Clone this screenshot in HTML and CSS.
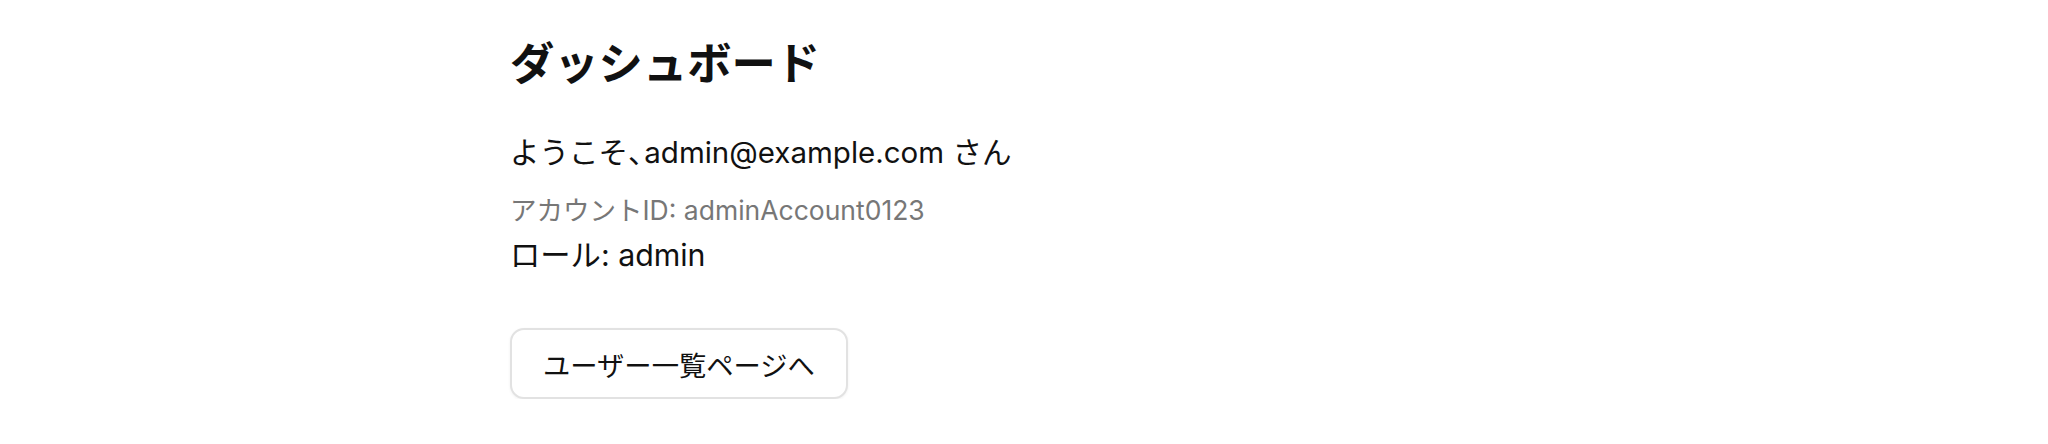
FILE: index.html
```html
<!DOCTYPE html>
<html lang="ja">
<head>
<meta charset="utf-8">
<title>ダッシュボード</title>
<link rel="stylesheet" href="styles.css">
</head>
<body>
<main class="page">
  <h1 class="title">ダッシュボード</h1>
  <p class="welcome">ようこそ<span class="comma">、</span>admin@example.com さん</p>
  <p class="account">アカウントID: adminAccount0123</p>
  <p class="role">ロール: admin</p>
  <div class="actions">
    <button class="btn" type="button">ユーザー一覧ページへ</button>
  </div>
</main>
</body>
</html>
```

FILE: styles.css
```css
html, body {
  margin: 0;
  padding: 0;
  background: #ffffff;
}
body {
  font-family: Inter, "Noto Sans CJK JP", sans-serif;
  color: #111111;
}
.page {
  width: 1028px;
  margin: 0 auto;
  padding-top: 34px;
  display: flex;
  flex-direction: column;
  align-items: flex-start;
}
.title {
  margin: 0;
  font-size: 44.3px;
  font-weight: 700;
  line-height: 61px;
}
.welcome {
  margin: 37px 0 0;
  font-size: 29.5px;
  line-height: 40px;
}
.comma {
  letter-spacing: -0.45em;
}
.account {
  margin: 20px 0 0;
  font-size: 26.5px;
  line-height: 36px;
  color: #777777;
}
.role {
  margin: 7px 0 0;
  font-size: 30.3px;
  line-height: 40px;
}
.actions {
  margin-top: 53px;
}
.btn {
  font-family: Inter, "Noto Sans CJK JP", sans-serif;
  font-size: 27.3px;
  color: #111111;
  background: #ffffff;
  border: 2px solid #e2e2e2;
  border-radius: 14px;
  padding: 0 31px;
  height: 71px;
  box-shadow: 0 1px 3px rgba(0,0,0,0.06);
  cursor: pointer;
}
```
